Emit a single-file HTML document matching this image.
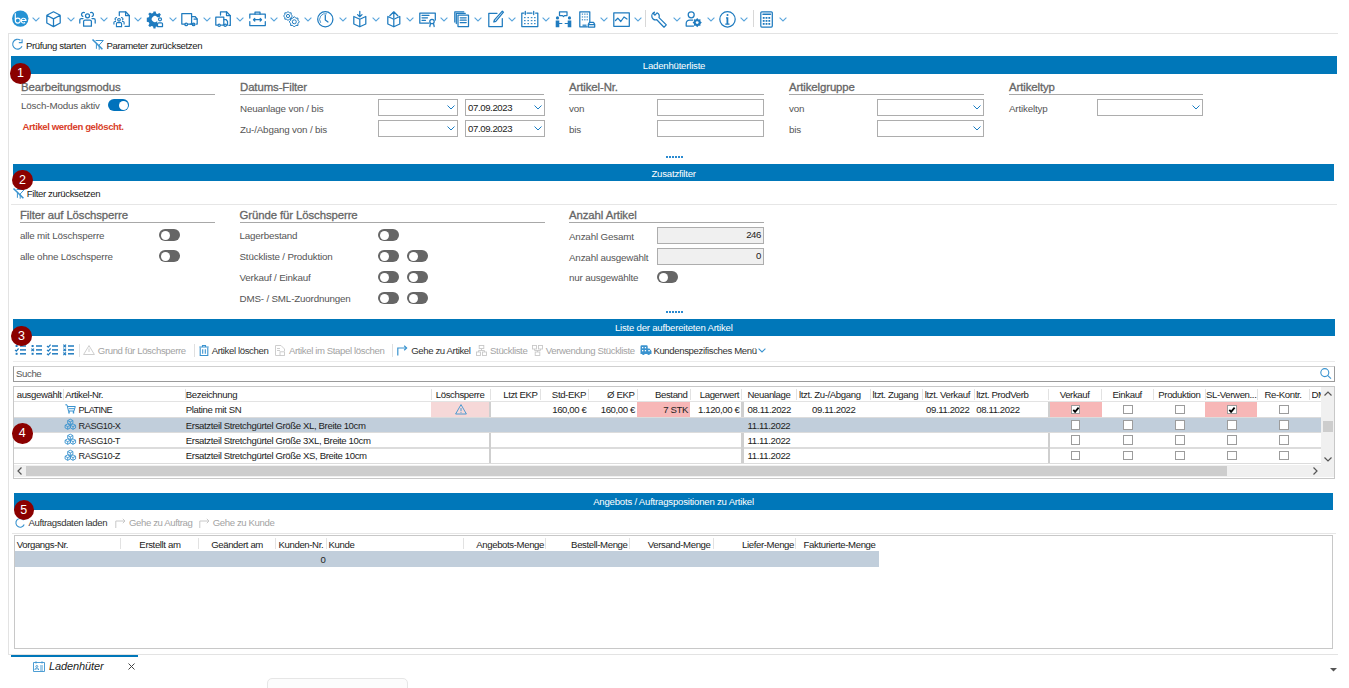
<!DOCTYPE html><html><head><meta charset="utf-8"><style>
*{box-sizing:border-box}
html,body{margin:0;padding:0}
body{width:1349px;height:688px;overflow:hidden;background:#fff;position:relative;font-family:"Liberation Sans",sans-serif;font-size:9.6px;letter-spacing:-0.38px;color:#222}
.t{position:absolute;white-space:nowrap;}
.b{position:absolute}
.lbl{color:#555;font-size:9.8px;letter-spacing:-0.17px}
.hd{font-size:11.4px;letter-spacing:-0.1px;color:#666;-webkit-text-stroke:0.3px #666}
.dis{color:#a3a3a3}
.wt{color:#fff}
svg{position:absolute;overflow:visible}
</style></head><body>
<div class="b" style="left:8px;top:33px;width:1330px;height:1px;background:#e3e3e3"></div>
<div class="b" style="left:8px;top:33px;width:1px;height:622px;background:#e3e3e3"></div>
<div class="b" style="left:8px;top:654px;width:1330px;height:1px;background:#e3e3e3"></div>
<div class="t " style="left:26px;top:37.5px;height:16px;line-height:16px;">Prüfung starten</div>
<div class="t " style="left:106.5px;top:37.5px;height:16px;line-height:16px;">Parameter zurücksetzen</div>
<div class="b" style="left:11px;top:56.2px;width:1326px;height:17.5px;background:#0077b9"></div>
<div class="t wt" style="left:11px;width:1326px;text-align:center;top:57.75px;height:16px;line-height:16px;letter-spacing:-0.21px">Ladenhüterliste</div>
<div class="b" style="left:13px;top:164.1px;width:1321.3px;height:17.400000000000006px;background:#0077b9"></div>
<div class="t wt" style="left:13px;width:1321.3px;text-align:center;top:165.60000000000002px;height:16px;line-height:16px;letter-spacing:-0.21px">Zusatzfilter</div>
<div class="b" style="left:13px;top:319px;width:1321.5px;height:17.30000000000001px;background:#0077b9"></div>
<div class="t wt" style="left:13px;width:1321.5px;text-align:center;top:320.45px;height:16px;line-height:16px;letter-spacing:-0.21px">Liste der aufbereiteten Artikel</div>
<div class="b" style="left:14px;top:493px;width:1319px;height:16.80000000000001px;background:#0077b9"></div>
<div class="t wt" style="left:14px;width:1319px;text-align:center;top:494.2px;height:16px;line-height:16px;letter-spacing:-0.21px">Angebots / Auftragspositionen zu Artikel</div>
<div class="t hd" style="left:21px;top:77.7px;height:18px;line-height:18px;">Bearbeitungsmodus</div>
<div class="b" style="left:21px;top:94px;width:194px;height:1px;background:#a8a8a8"></div>
<div class="t hd" style="left:240px;top:77.7px;height:18px;line-height:18px;">Datums-Filter</div>
<div class="b" style="left:240px;top:94px;width:304px;height:1px;background:#a8a8a8"></div>
<div class="t hd" style="left:569px;top:77.7px;height:18px;line-height:18px;">Artikel-Nr.</div>
<div class="b" style="left:569px;top:94px;width:195px;height:1px;background:#a8a8a8"></div>
<div class="t hd" style="left:789px;top:77.7px;height:18px;line-height:18px;">Artikelgruppe</div>
<div class="b" style="left:789px;top:94px;width:195px;height:1px;background:#a8a8a8"></div>
<div class="t hd" style="left:1009px;top:77.7px;height:18px;line-height:18px;">Artikeltyp</div>
<div class="b" style="left:1009px;top:94px;width:194px;height:1px;background:#a8a8a8"></div>
<div class="t lbl" style="left:21px;top:98.0px;height:16px;line-height:16px;">Lösch-Modus aktiv</div>
<div class="b" style="left:108px;top:99px;width:21px;height:12px;border-radius:6px;background:#0072bc"></div>
<div class="b" style="left:119px;top:100.5px;width:9px;height:9px;border-radius:50%;background:#fff"></div>
<div class="t " style="left:22.5px;top:119.0px;height:16px;line-height:16px;color:#d9412a;font-weight:bold;letter-spacing:-0.41px">Artikel werden gelöscht.</div>
<div class="t lbl" style="left:240px;top:100.8px;height:16px;line-height:16px;">Neuanlage von / bis</div>
<div class="t lbl" style="left:240px;top:122.10000000000002px;height:16px;line-height:16px;">Zu-/Abgang von / bis</div>
<div class="b" style="left:378px;top:99px;width:80px;height:17px;border:1px solid #adadad;background:#fff"></div>
<svg style="left:446.5px;top:105.3px" width="8" height="5"><path d="M0.5 0.5 L4 4 L7.5 0.5" fill="none" stroke="#1a7dc4" stroke-width="1"/></svg>
<div class="b" style="left:465px;top:99px;width:80px;height:17px;border:1px solid #adadad;background:#fff"></div>
<div class="t " style="left:468px;top:99.5px;height:16px;line-height:16px;">07.09.2023</div>
<svg style="left:533.5px;top:105.3px" width="8" height="5"><path d="M0.5 0.5 L4 4 L7.5 0.5" fill="none" stroke="#1a7dc4" stroke-width="1"/></svg>
<div class="b" style="left:378px;top:120px;width:80px;height:17px;border:1px solid #adadad;background:#fff"></div>
<svg style="left:446.5px;top:126.30000000000001px" width="8" height="5"><path d="M0.5 0.5 L4 4 L7.5 0.5" fill="none" stroke="#1a7dc4" stroke-width="1"/></svg>
<div class="b" style="left:465px;top:120px;width:80px;height:17px;border:1px solid #adadad;background:#fff"></div>
<div class="t " style="left:468px;top:120.5px;height:16px;line-height:16px;">07.09.2023</div>
<svg style="left:533.5px;top:126.30000000000001px" width="8" height="5"><path d="M0.5 0.5 L4 4 L7.5 0.5" fill="none" stroke="#1a7dc4" stroke-width="1"/></svg>
<div class="t lbl" style="left:569px;top:100.8px;height:16px;line-height:16px;">von</div>
<div class="t lbl" style="left:569px;top:122.10000000000002px;height:16px;line-height:16px;">bis</div>
<div class="b" style="left:657px;top:99px;width:107px;height:17px;border:1px solid #adadad;background:#fff"></div>
<div class="b" style="left:657px;top:120px;width:107px;height:17px;border:1px solid #adadad;background:#fff"></div>
<div class="t lbl" style="left:789px;top:100.8px;height:16px;line-height:16px;">von</div>
<div class="t lbl" style="left:789px;top:122.10000000000002px;height:16px;line-height:16px;">bis</div>
<div class="b" style="left:877px;top:99px;width:107px;height:17px;border:1px solid #adadad;background:#fff"></div>
<svg style="left:972.5px;top:105.3px" width="8" height="5"><path d="M0.5 0.5 L4 4 L7.5 0.5" fill="none" stroke="#1a7dc4" stroke-width="1"/></svg>
<div class="b" style="left:877px;top:120px;width:107px;height:17px;border:1px solid #adadad;background:#fff"></div>
<svg style="left:972.5px;top:126.30000000000001px" width="8" height="5"><path d="M0.5 0.5 L4 4 L7.5 0.5" fill="none" stroke="#1a7dc4" stroke-width="1"/></svg>
<div class="t lbl" style="left:1009px;top:100.8px;height:16px;line-height:16px;">Artikeltyp</div>
<div class="b" style="left:1097px;top:99px;width:106px;height:17px;border:1px solid #adadad;background:#fff"></div>
<svg style="left:1191.5px;top:105.3px" width="8" height="5"><path d="M0.5 0.5 L4 4 L7.5 0.5" fill="none" stroke="#1a7dc4" stroke-width="1"/></svg>
<div class="b" style="left:666px;top:156px;width:1.5px;height:1.5px;background:#2a8ad0"></div>
<div class="b" style="left:669px;top:156px;width:1.5px;height:1.5px;background:#2a8ad0"></div>
<div class="b" style="left:672px;top:156px;width:1.5px;height:1.5px;background:#2a8ad0"></div>
<div class="b" style="left:675px;top:156px;width:1.5px;height:1.5px;background:#2a8ad0"></div>
<div class="b" style="left:678px;top:156px;width:1.5px;height:1.5px;background:#2a8ad0"></div>
<div class="b" style="left:681px;top:156px;width:1.5px;height:1.5px;background:#2a8ad0"></div>
<div class="t " style="left:26.8px;top:186.2px;height:16px;line-height:16px;">Filter zurücksetzen</div>
<div class="b" style="left:11px;top:204px;width:1326px;height:1px;background:#e6e6e6"></div>
<div class="t hd" style="left:20px;top:205.7px;height:18px;line-height:18px;">Filter auf Löschsperre</div>
<div class="b" style="left:20px;top:222px;width:195px;height:1px;background:#a8a8a8"></div>
<div class="t hd" style="left:239.5px;top:205.7px;height:18px;line-height:18px;">Gründe für Löschsperre</div>
<div class="b" style="left:239.5px;top:222px;width:305.5px;height:1px;background:#a8a8a8"></div>
<div class="t hd" style="left:569px;top:205.7px;height:18px;line-height:18px;">Anzahl Artikel</div>
<div class="b" style="left:569px;top:222px;width:195px;height:1px;background:#a8a8a8"></div>
<div class="t lbl" style="left:20px;top:228.3px;height:16px;line-height:16px;">alle mit Löschsperre</div>
<div class="t lbl" style="left:20px;top:248.8px;height:16px;line-height:16px;">alle ohne Löschsperre</div>
<div class="b" style="left:159px;top:229px;width:21px;height:12px;border-radius:6px;background:#666"></div>
<div class="b" style="left:160.5px;top:230.5px;width:9px;height:9px;border-radius:50%;background:#fff"></div>
<div class="b" style="left:159px;top:250px;width:21px;height:12px;border-radius:6px;background:#666"></div>
<div class="b" style="left:160.5px;top:251.5px;width:9px;height:9px;border-radius:50%;background:#fff"></div>
<div class="t lbl" style="left:239.5px;top:228.3px;height:16px;line-height:16px;">Lagerbestand</div>
<div class="t lbl" style="left:239.5px;top:248.8px;height:16px;line-height:16px;">Stückliste / Produktion</div>
<div class="t lbl" style="left:239.5px;top:270.0px;height:16px;line-height:16px;">Verkauf / Einkauf</div>
<div class="t lbl" style="left:239.5px;top:290.6px;height:16px;line-height:16px;">DMS- / SML-Zuordnungen</div>
<div class="b" style="left:378px;top:229px;width:21px;height:12px;border-radius:6px;background:#666"></div>
<div class="b" style="left:379.5px;top:230.5px;width:9px;height:9px;border-radius:50%;background:#fff"></div>
<div class="b" style="left:378px;top:250px;width:21px;height:12px;border-radius:6px;background:#666"></div>
<div class="b" style="left:379.5px;top:251.5px;width:9px;height:9px;border-radius:50%;background:#fff"></div>
<div class="b" style="left:407px;top:250px;width:21px;height:12px;border-radius:6px;background:#666"></div>
<div class="b" style="left:408.5px;top:251.5px;width:9px;height:9px;border-radius:50%;background:#fff"></div>
<div class="b" style="left:378px;top:271px;width:21px;height:12px;border-radius:6px;background:#666"></div>
<div class="b" style="left:379.5px;top:272.5px;width:9px;height:9px;border-radius:50%;background:#fff"></div>
<div class="b" style="left:407px;top:271px;width:21px;height:12px;border-radius:6px;background:#666"></div>
<div class="b" style="left:408.5px;top:272.5px;width:9px;height:9px;border-radius:50%;background:#fff"></div>
<div class="b" style="left:378px;top:292px;width:21px;height:12px;border-radius:6px;background:#666"></div>
<div class="b" style="left:379.5px;top:293.5px;width:9px;height:9px;border-radius:50%;background:#fff"></div>
<div class="b" style="left:407px;top:292px;width:21px;height:12px;border-radius:6px;background:#666"></div>
<div class="b" style="left:408.5px;top:293.5px;width:9px;height:9px;border-radius:50%;background:#fff"></div>
<div class="t lbl" style="left:569px;top:228.9px;height:16px;line-height:16px;">Anzahl Gesamt</div>
<div class="t lbl" style="left:569px;top:249.5px;height:16px;line-height:16px;">Anzahl ausgewählt</div>
<div class="t lbl" style="left:569px;top:269.5px;height:16px;line-height:16px;">nur ausgewählte</div>
<div class="b" style="left:657px;top:227px;width:107px;height:17px;border:1px solid #adadad;background:#f0f0f0"></div>
<div class="b" style="left:657px;top:247.5px;width:107px;height:17.0px;border:1px solid #adadad;background:#f0f0f0"></div>
<div class="t " style="right:588px;top:227.0px;height:16px;line-height:16px;">246</div>
<div class="t " style="right:588px;top:248.0px;height:16px;line-height:16px;">0</div>
<div class="b" style="left:657px;top:271px;width:21px;height:12px;border-radius:6px;background:#666"></div>
<div class="b" style="left:658.5px;top:272.5px;width:9px;height:9px;border-radius:50%;background:#fff"></div>
<div class="b" style="left:666px;top:311px;width:1.5px;height:1.5px;background:#2a8ad0"></div>
<div class="b" style="left:669px;top:311px;width:1.5px;height:1.5px;background:#2a8ad0"></div>
<div class="b" style="left:672px;top:311px;width:1.5px;height:1.5px;background:#2a8ad0"></div>
<div class="b" style="left:675px;top:311px;width:1.5px;height:1.5px;background:#2a8ad0"></div>
<div class="b" style="left:678px;top:311px;width:1.5px;height:1.5px;background:#2a8ad0"></div>
<div class="b" style="left:681px;top:311px;width:1.5px;height:1.5px;background:#2a8ad0"></div>
<div class="b" style="left:13px;top:360.8px;width:1322px;height:1.1999999999999886px;background:#ebebeb"></div>
<div class="b" style="left:13px;top:365.7px;width:1322px;height:15.900000000000034px;border:1px solid #9a9a9a;border-top:1.5px solid #cfcfcf;background:#fff"></div>
<div class="t " style="left:16px;top:365.8px;height:16px;line-height:16px;color:#555">Suche</div>
<div class="b" style="left:13px;top:386px;width:1322px;height:93px;border:1px solid #c8c8c8;background:#fff"></div>
<div class="b" style="left:12px;top:532.5px;width:1324px;height:1.0px;background:#e6e6e6"></div>
<div class="b" style="left:14px;top:535px;width:1319px;height:114px;border:1px solid #c8c8c8;background:#fff"></div>
<div class="b" style="left:11px;top:654.5px;width:127px;height:2.0px;background:#0077b9"></div>
<div class="t " style="left:49px;top:658.0px;height:16px;line-height:16px;font-style:italic;font-size:11px;letter-spacing:-0.1px">Ladenhüter</div>
<div class="b" style="left:63.3px;top:389px;width:1.0px;height:11px;background:#e2e2e2"></div>
<div class="b" style="left:184.6px;top:389px;width:1.0px;height:11px;background:#e2e2e2"></div>
<div class="b" style="left:430.6px;top:389px;width:1.0px;height:11px;background:#e2e2e2"></div>
<div class="b" style="left:489.5px;top:389px;width:1.0px;height:11px;background:#e2e2e2"></div>
<div class="b" style="left:540px;top:389px;width:1px;height:11px;background:#e2e2e2"></div>
<div class="b" style="left:588px;top:389px;width:1px;height:11px;background:#e2e2e2"></div>
<div class="b" style="left:636.7px;top:389px;width:1.0px;height:11px;background:#e2e2e2"></div>
<div class="b" style="left:689.5px;top:389px;width:1.0px;height:11px;background:#e2e2e2"></div>
<div class="b" style="left:741px;top:389px;width:1px;height:11px;background:#e2e2e2"></div>
<div class="b" style="left:795.6px;top:389px;width:1.0px;height:11px;background:#e2e2e2"></div>
<div class="b" style="left:870.2px;top:389px;width:1.0px;height:11px;background:#e2e2e2"></div>
<div class="b" style="left:922.4px;top:389px;width:1.0px;height:11px;background:#e2e2e2"></div>
<div class="b" style="left:974px;top:389px;width:1px;height:11px;background:#e2e2e2"></div>
<div class="b" style="left:1048px;top:389px;width:1px;height:11px;background:#e2e2e2"></div>
<div class="b" style="left:1101.2px;top:389px;width:1.0px;height:11px;background:#e2e2e2"></div>
<div class="b" style="left:1153.3px;top:389px;width:1.0px;height:11px;background:#e2e2e2"></div>
<div class="b" style="left:1205.4px;top:389px;width:1.0px;height:11px;background:#e2e2e2"></div>
<div class="b" style="left:1257.1px;top:389px;width:1.0px;height:11px;background:#e2e2e2"></div>
<div class="b" style="left:1309.1px;top:389px;width:1.0px;height:11px;background:#e2e2e2"></div>
<div class="b" style="left:14px;top:401px;width:1307px;height:1px;background:#e3e3e3"></div>
<div class="t " style="left:16.7px;top:387.0px;height:16px;line-height:16px;">ausgewählt</div>
<div class="t " style="left:65.2px;top:387.0px;height:16px;line-height:16px;">Artikel-Nr.</div>
<div class="t " style="left:185.8px;top:387.0px;height:16px;line-height:16px;">Bezeichnung</div>
<div class="t " style="left:430.6px;width:58.89999999999998px;text-align:center;top:387.0px;height:16px;line-height:16px;">Löschsperre</div>
<div class="t " style="right:811.5px;top:387.0px;height:16px;line-height:16px;">Ltzt EKP</div>
<div class="t " style="right:763px;top:387.0px;height:16px;line-height:16px;">Std-EKP</div>
<div class="t " style="right:714.5px;top:387.0px;height:16px;line-height:16px;">Ø EKP</div>
<div class="t " style="right:661.5px;top:387.0px;height:16px;line-height:16px;">Bestand</div>
<div class="t " style="right:610px;top:387.0px;height:16px;line-height:16px;">Lagerwert</div>
<div class="t " style="left:747.5px;top:387.0px;height:16px;line-height:16px;">Neuanlage</div>
<div class="t " style="left:799px;top:387.0px;height:16px;line-height:16px;">ltzt. Zu-/Abgang</div>
<div class="t " style="left:872.6px;top:387.0px;height:16px;line-height:16px;">ltzt. Zugang</div>
<div class="t " style="left:924.8px;top:387.0px;height:16px;line-height:16px;">ltzt. Verkauf</div>
<div class="t " style="left:976.2px;top:387.0px;height:16px;line-height:16px;">ltzt. ProdVerb</div>
<div class="t " style="left:1048px;width:53.200000000000045px;text-align:center;top:387.0px;height:16px;line-height:16px;">Verkauf</div>
<div class="t " style="left:1101.2px;width:52.09999999999991px;text-align:center;top:387.0px;height:16px;line-height:16px;">Einkauf</div>
<div class="t " style="left:1153.3px;width:52.100000000000136px;text-align:center;top:387.0px;height:16px;line-height:16px;">Produktion</div>
<div class="t " style="left:1205.4px;width:51.69999999999982px;text-align:center;top:387.0px;height:16px;line-height:16px;">SL-Verwen...</div>
<div class="t " style="left:1257.1px;width:52.0px;text-align:center;top:387.0px;height:16px;line-height:16px;">Re-Kontr.</div>
<div class="t" style="left:1311.5px;top:387px;height:16px;line-height:16px;width:10px;overflow:hidden">DM</div>
<div class="b" style="left:14px;top:417.3px;width:1307px;height:15.300000000000011px;background:#c1cedb"></div>
<div class="b" style="left:14px;top:416.6px;width:1307px;height:1.3999999999999773px;background:#dcdcdc"></div>
<div class="b" style="left:14px;top:431.90000000000003px;width:1307px;height:1.3999999999999773px;background:#dcdcdc"></div>
<div class="b" style="left:14px;top:447.2px;width:1307px;height:1.3999999999999773px;background:#dcdcdc"></div>
<div class="b" style="left:14px;top:462.5px;width:1307px;height:1.3999999999999773px;background:#dcdcdc"></div>
<div class="b" style="left:431px;top:402px;width:58.5px;height:14.800000000000011px;background:#f6d8d8"></div>
<div class="b" style="left:637px;top:402px;width:52.5px;height:14.800000000000011px;background:#f7b7b7"></div>
<div class="b" style="left:1049.5px;top:402px;width:52.0px;height:14.800000000000011px;background:#f7b7b7"></div>
<div class="b" style="left:1205.4px;top:402px;width:51.69999999999982px;height:14.800000000000011px;background:#f7b7b7"></div>
<div class="b" style="left:488.8px;top:402px;width:2.3999999999999773px;height:14.800000000000011px;background:#cfcfcf"></div>
<div class="b" style="left:488.8px;top:432.6px;width:2.3999999999999773px;height:30.599999999999966px;background:#cfcfcf"></div>
<div class="b" style="left:741.2px;top:402px;width:2.3999999999999773px;height:14.800000000000011px;background:#cfcfcf"></div>
<div class="b" style="left:741.2px;top:432.6px;width:2.3999999999999773px;height:30.599999999999966px;background:#cfcfcf"></div>
<div class="b" style="left:1047.5px;top:402px;width:2.400000000000091px;height:14.800000000000011px;background:#cfcfcf"></div>
<div class="b" style="left:1047.5px;top:432.6px;width:2.400000000000091px;height:30.599999999999966px;background:#cfcfcf"></div>
<div class="t " style="left:78.6px;top:402.45px;height:16px;line-height:16px;font-size:9.2px;letter-spacing:-0.6px">PLATINE</div>
<div class="t " style="left:185.8px;top:402.45px;height:16px;line-height:16px;">Platine mit SN</div>
<div class="t " style="right:762.5px;top:402.45px;height:16px;line-height:16px;">160,00 €</div>
<div class="t " style="right:714px;top:402.45px;height:16px;line-height:16px;">160,00 €</div>
<div class="t " style="right:661px;top:402.45px;height:16px;line-height:16px;">7 STK</div>
<div class="t " style="right:609.5px;top:402.45px;height:16px;line-height:16px;">1.120,00 €</div>
<div class="t " style="left:747.5px;top:402.45px;height:16px;line-height:16px;">08.11.2022</div>
<div class="t " style="left:812px;top:402.45px;height:16px;line-height:16px;">09.11.2022</div>
<div class="t " style="right:379.5px;top:402.45px;height:16px;line-height:16px;">09.11.2022</div>
<div class="t " style="left:976.2px;top:402.45px;height:16px;line-height:16px;">08.11.2022</div>
<div class="t " style="left:78.6px;top:417.75000000000006px;height:16px;line-height:16px;font-size:9.2px;letter-spacing:-0.45px">RASG10-X</div>
<div class="t " style="left:185.8px;top:417.75000000000006px;height:16px;line-height:16px;">Ersatzteil Stretchgürtel Größe XL, Breite 10cm</div>
<div class="t " style="left:747.5px;top:417.75000000000006px;height:16px;line-height:16px;">11.11.2022</div>
<div class="t " style="left:78.6px;top:433.05px;height:16px;line-height:16px;font-size:9.2px;letter-spacing:-0.45px">RASG10-T</div>
<div class="t " style="left:185.8px;top:433.05px;height:16px;line-height:16px;">Ersatzteil Stretchgürtel Größe 3XL, Breite 10cm</div>
<div class="t " style="left:747.5px;top:433.05px;height:16px;line-height:16px;">11.11.2022</div>
<div class="t " style="left:78.6px;top:448.34999999999997px;height:16px;line-height:16px;font-size:9.2px;letter-spacing:-0.45px">RASG10-Z</div>
<div class="t " style="left:185.8px;top:448.34999999999997px;height:16px;line-height:16px;">Ersatzteil Stretchgürtel Größe XS, Breite 10cm</div>
<div class="t " style="left:747.5px;top:448.34999999999997px;height:16px;line-height:16px;">11.11.2022</div>
<div class="b" style="left:1070.6px;top:404.84999999999997px;width:9.6px;height:9.6px;border:1px solid #9c9c9c;background:#fff"></div>
<svg style="left:1070.6px;top:404.84999999999997px" width="10" height="10"><path d="M2.3 4.8 L4.1 6.8 L7.6 2.6" fill="none" stroke="#000" stroke-width="1.8"/></svg>
<div class="b" style="left:1123.25px;top:404.84999999999997px;width:9.6px;height:9.6px;border:1px solid #9c9c9c;background:#fff"></div>
<div class="b" style="left:1175.35px;top:404.84999999999997px;width:9.6px;height:9.6px;border:1px solid #9c9c9c;background:#fff"></div>
<div class="b" style="left:1227.25px;top:404.84999999999997px;width:9.6px;height:9.6px;border:1px solid #9c9c9c;background:#fff"></div>
<svg style="left:1227.25px;top:404.84999999999997px" width="10" height="10"><path d="M2.3 4.8 L4.1 6.8 L7.6 2.6" fill="none" stroke="#000" stroke-width="1.8"/></svg>
<div class="b" style="left:1279.1px;top:404.84999999999997px;width:9.6px;height:9.6px;border:1px solid #9c9c9c;background:#fff"></div>
<div class="b" style="left:1070.6px;top:420.15000000000003px;width:9.6px;height:9.6px;border:1px solid #9c9c9c;background:#fff"></div>
<div class="b" style="left:1123.25px;top:420.15000000000003px;width:9.6px;height:9.6px;border:1px solid #9c9c9c;background:#fff"></div>
<div class="b" style="left:1175.35px;top:420.15000000000003px;width:9.6px;height:9.6px;border:1px solid #9c9c9c;background:#fff"></div>
<div class="b" style="left:1227.25px;top:420.15000000000003px;width:9.6px;height:9.6px;border:1px solid #9c9c9c;background:#fff"></div>
<div class="b" style="left:1279.1px;top:420.15000000000003px;width:9.6px;height:9.6px;border:1px solid #9c9c9c;background:#fff"></div>
<div class="b" style="left:1070.6px;top:435.45px;width:9.6px;height:9.6px;border:1px solid #9c9c9c;background:#fff"></div>
<div class="b" style="left:1123.25px;top:435.45px;width:9.6px;height:9.6px;border:1px solid #9c9c9c;background:#fff"></div>
<div class="b" style="left:1175.35px;top:435.45px;width:9.6px;height:9.6px;border:1px solid #9c9c9c;background:#fff"></div>
<div class="b" style="left:1227.25px;top:435.45px;width:9.6px;height:9.6px;border:1px solid #9c9c9c;background:#fff"></div>
<div class="b" style="left:1279.1px;top:435.45px;width:9.6px;height:9.6px;border:1px solid #9c9c9c;background:#fff"></div>
<div class="b" style="left:1070.6px;top:450.74999999999994px;width:9.6px;height:9.6px;border:1px solid #9c9c9c;background:#fff"></div>
<div class="b" style="left:1123.25px;top:450.74999999999994px;width:9.6px;height:9.6px;border:1px solid #9c9c9c;background:#fff"></div>
<div class="b" style="left:1175.35px;top:450.74999999999994px;width:9.6px;height:9.6px;border:1px solid #9c9c9c;background:#fff"></div>
<div class="b" style="left:1227.25px;top:450.74999999999994px;width:9.6px;height:9.6px;border:1px solid #9c9c9c;background:#fff"></div>
<div class="b" style="left:1279.1px;top:450.74999999999994px;width:9.6px;height:9.6px;border:1px solid #9c9c9c;background:#fff"></div>
<div class="b" style="left:1321.3px;top:387px;width:13.0px;height:90px;background:#f0f0f0"></div>
<div class="b" style="left:1322.5px;top:420.5px;width:10.5px;height:11.5px;background:#cdcdcd"></div>
<svg style="left:1324px;top:391px" width="8" height="5"><path d="M0.5 4.5 L4 1 L7.5 4.5" fill="none" stroke="#555" stroke-width="1.2"/></svg>
<svg style="left:1324px;top:457px" width="8" height="5"><path d="M0.5 0.5 L4 4 L7.5 0.5" fill="none" stroke="#555" stroke-width="1.2"/></svg>
<div class="b" style="left:14px;top:465px;width:1307.3px;height:12px;background:#f0f0f0"></div>
<div class="b" style="left:26px;top:466px;width:1200.7px;height:10px;background:#cdcdcd"></div>
<svg style="left:17px;top:467px" width="5" height="8"><path d="M4.5 0.5 L1 4 L4.5 7.5" fill="none" stroke="#555" stroke-width="1.2"/></svg>
<svg style="left:1313px;top:467px" width="5" height="8"><path d="M0.5 0.5 L4 4 L0.5 7.5" fill="none" stroke="#555" stroke-width="1.2"/></svg>
<div class="b" style="left:120px;top:538px;width:1px;height:11px;background:#e2e2e2"></div>
<div class="b" style="left:197.5px;top:538px;width:1.0px;height:11px;background:#e2e2e2"></div>
<div class="b" style="left:275.2px;top:538px;width:1.0px;height:11px;background:#e2e2e2"></div>
<div class="b" style="left:326.2px;top:538px;width:1.0px;height:11px;background:#e2e2e2"></div>
<div class="b" style="left:462.7px;top:538px;width:1.0px;height:11px;background:#e2e2e2"></div>
<div class="b" style="left:545.3px;top:538px;width:1.0px;height:11px;background:#e2e2e2"></div>
<div class="b" style="left:629.2px;top:538px;width:1.0px;height:11px;background:#e2e2e2"></div>
<div class="b" style="left:712.5px;top:538px;width:1.0px;height:11px;background:#e2e2e2"></div>
<div class="b" style="left:795.4px;top:538px;width:1.0px;height:11px;background:#e2e2e2"></div>
<div class="t " style="left:16.7px;top:536.7px;height:16px;line-height:16px;">Vorgangs-Nr.</div>
<div class="t " style="right:1168.5px;top:536.7px;height:16px;line-height:16px;">Erstellt am</div>
<div class="t " style="right:1086px;top:536.7px;height:16px;line-height:16px;">Geändert am</div>
<div class="t " style="left:278.5px;top:536.7px;height:16px;line-height:16px;">Kunden-Nr.</div>
<div class="t " style="left:328.5px;top:536.7px;height:16px;line-height:16px;">Kunde</div>
<div class="t " style="right:805px;top:536.7px;height:16px;line-height:16px;">Angebots-Menge</div>
<div class="t " style="right:721.5px;top:536.7px;height:16px;line-height:16px;">Bestell-Menge</div>
<div class="t " style="right:638.5px;top:536.7px;height:16px;line-height:16px;">Versand-Menge</div>
<div class="t " style="right:555px;top:536.7px;height:16px;line-height:16px;">Liefer-Menge</div>
<div class="t " style="left:803.6px;top:536.7px;height:16px;line-height:16px;">Fakturierte-Menge</div>
<div class="b" style="left:15px;top:550.9px;width:864px;height:15.800000000000068px;background:#c1cedb"></div>
<div class="t " style="right:1023.5px;top:551.5px;height:16px;line-height:16px;">0</div>
<svg style="left:11.7px;top:10.4px" width="17" height="17" viewBox="0 0 17 17"><circle cx="8.3" cy="8.6" r="8.2" fill="#2592d4"/><path d="M3.3 3.2V10.6a2.5 2.5 0 1 0 2.5-2.5a2.5 2.5 0 0 0-2.5 2.5" fill="none" stroke="#fff" stroke-width="1.15"/><path d="M9.2 10.5H14a2.4 2.4 0 1 0-0.9 2" fill="none" stroke="#fff" stroke-width="1.15"/></svg>
<svg style="left:32.4px;top:16.5px" width="8" height="5" viewBox="0 0 8 5"><path d="M0.6 0.6L4 4L7.4 0.6" fill="none" stroke="#5aa5dc" stroke-width="1.1"/></svg>
<svg style="left:46.2px;top:10.8px" width="17" height="17" viewBox="0 0 17 17"><path fill="none" stroke="#1f7bbf" stroke-width="1.25" stroke-linejoin="round" stroke-linecap="round" d="M7.5 0.8L14.2 4.3V12L7.5 15.6L0.8 12V4.3Z M0.8 4.3L7.5 7.9L14.2 4.3 M7.5 7.9V15.6"/></svg>
<svg style="left:66.5px;top:16.5px" width="8" height="5" viewBox="0 0 8 5"><path d="M0.6 0.6L4 4L7.4 0.6" fill="none" stroke="#5aa5dc" stroke-width="1.1"/></svg>
<svg style="left:79.2px;top:10.8px" width="17" height="17" viewBox="0 0 17 17"><g fill="none" stroke="#1f7bbf" stroke-width="1.25" stroke-linejoin="round" stroke-linecap="round"><circle cx="8.5" cy="4.8" r="2"/><path d="M4.6 15.2V10.6a1.5 1.5 0 0 1 1.5-1.5h4.8a1.5 1.5 0 0 1 1.5 1.5v4.6z"/><path d="M5.4 1.6A2 2 0 1 0 3.8 5.4"/><path d="M11.6 1.6A2 2 0 1 1 13.2 5.4"/><path d="M0.8 12V9a1.5 1.5 0 0 1 1.5-1.5H4"/><path d="M16.2 12V9a1.5 1.5 0 0 0-1.5-1.5H13"/></g></svg>
<svg style="left:100.3px;top:16.5px" width="8" height="5" viewBox="0 0 8 5"><path d="M0.6 0.6L4 4L7.4 0.6" fill="none" stroke="#5aa5dc" stroke-width="1.1"/></svg>
<svg style="left:112.8px;top:10.6px" width="17" height="17" viewBox="0 0 17 17"><g fill="none" stroke="#1f7bbf" stroke-width="1.25" stroke-linejoin="round" stroke-linecap="round"><path d="M6.3 4.5V0.8h6.3l3.7 3.7v10.8H12"/><path d="M12.6 0.8v3.7h3.7"/></g><g transform="translate(0.4,5.6) scale(0.66)" fill="none" stroke="#1f7bbf" stroke-width="1.7"><circle cx="8.5" cy="4.8" r="2"/><path d="M4.6 15.2V10.6a1.5 1.5 0 0 1 1.5-1.5h4.8a1.5 1.5 0 0 1 1.5 1.5v4.6z"/><path d="M5.4 1.6A2 2 0 1 0 3.8 5.4"/><path d="M11.6 1.6A2 2 0 1 1 13.2 5.4"/><path d="M0.8 12V9a1.5 1.5 0 0 1 1.5-1.5H4"/><path d="M16.2 12V9a1.5 1.5 0 0 0-1.5-1.5H13"/></g></svg>
<svg style="left:134.4px;top:16.5px" width="8" height="5" viewBox="0 0 8 5"><path d="M0.6 0.6L4 4L7.4 0.6" fill="none" stroke="#5aa5dc" stroke-width="1.1"/></svg>
<svg style="left:147.3px;top:10.6px" width="17" height="17" viewBox="0 0 17 17"><path fill="#1f7bbf" d="M6.5 0.5h2.2l0.4 2 1.5 0.6 1.7-1.1 1.6 1.6-1.1 1.7 0.4 1H10.2a3 3 0 1 0 0 3.6v5.5l-1.5 0.3-0.2 1.8H6.5l-0.4-2-1.5-0.6-1.7 1.1-1.6-1.6 1.1-1.7-0.6-1.5-2-0.4V6.7l2-0.4 0.6-1.5-1.1-1.7 1.6-1.6 1.7 1.1 1.5-0.6z"/><g fill="none" stroke="#1f7bbf" stroke-width="1.25" stroke-linejoin="round" stroke-linecap="round"><circle cx="13" cy="8.3" r="1.5"/><path d="M10.5 15.5v-2.5a1.2 1.2 0 0 1 1.2-1.2h2.6a1.2 1.2 0 0 1 1.2 1.2v2.5z"/></g></svg>
<svg style="left:168.5px;top:16.5px" width="8" height="5" viewBox="0 0 8 5"><path d="M0.6 0.6L4 4L7.4 0.6" fill="none" stroke="#5aa5dc" stroke-width="1.1"/></svg>
<svg style="left:181px;top:12px" width="17" height="17" viewBox="0 0 17 17"><g fill="none" stroke="#1f7bbf" stroke-width="1.25" stroke-linejoin="round" stroke-linecap="round"><path d="M4 12H0.8V1.5h9.8V12H6.5"/><path d="M10.6 4.5h3.4l2.2 2.5V12h-0.8 M13.8 12h-4.5"/><circle cx="5.2" cy="12.4" r="1.3"/><circle cx="12.6" cy="12.4" r="1.3"/><path d="M13 7h3"/></g></svg>
<svg style="left:202.5px;top:16.5px" width="8" height="5" viewBox="0 0 8 5"><path d="M0.6 0.6L4 4L7.4 0.6" fill="none" stroke="#5aa5dc" stroke-width="1.1"/></svg>
<svg style="left:215px;top:10.8px" width="17" height="17" viewBox="0 0 17 17"><g fill="none" stroke="#1f7bbf" stroke-width="1.25" stroke-linejoin="round" stroke-linecap="round"><path d="M5.5 4V0.8h6l3.8 3.8v9.8H14"/><path d="M11.5 0.8V4.6h3.8"/><path d="M2.5 14H0.8V6.2h8V14H6.5"/><path d="M8.8 8.5h2.2l1.5 1.8V14h-1"/><circle cx="4.2" cy="14.2" r="1.2"/><circle cx="10.2" cy="14.2" r="1.2"/></g></svg>
<svg style="left:236.2px;top:16.5px" width="8" height="5" viewBox="0 0 8 5"><path d="M0.6 0.6L4 4L7.4 0.6" fill="none" stroke="#5aa5dc" stroke-width="1.1"/></svg>
<svg style="left:249.1px;top:11px" width="17" height="17" viewBox="0 0 17 17"><g fill="none" stroke="#1f7bbf" stroke-width="1.25" stroke-linejoin="round" stroke-linecap="round"><path d="M0.8 7V3.2h15.5V7 M0.8 10.5v4h15.5v-4"/><path d="M6 3.2V1.2h5v2"/><path d="M4.5 8.7h8 M5.8 7.4L4.5 8.7L5.8 10 M11.2 7.4L12.5 8.7L11.2 10"/></g></svg>
<svg style="left:270.3px;top:16.5px" width="8" height="5" viewBox="0 0 8 5"><path d="M0.6 0.6L4 4L7.4 0.6" fill="none" stroke="#5aa5dc" stroke-width="1.1"/></svg>
<svg style="left:282.9px;top:11px" width="17" height="17" viewBox="0 0 17 17"><g fill="none" stroke="#1f7bbf" stroke-width="1"><path d="M9.50 5.00L8.12 6.29L8.18 8.18L6.29 8.12L5.00 9.50L3.71 8.12L1.82 8.18L1.88 6.29L0.50 5.00L1.88 3.71L1.82 1.82L3.71 1.88L5.00 0.50L6.29 1.88L8.18 1.82L8.12 3.71Z"/><circle cx="5" cy="5" r="1.6"/><path d="M16.50 10.80L14.90 12.29L14.98 14.48L12.79 14.40L11.30 16.00L9.81 14.40L7.62 14.48L7.70 12.29L6.10 10.80L7.70 9.31L7.62 7.12L9.81 7.20L11.30 5.60L12.79 7.20L14.98 7.12L14.90 9.31Z"/><circle cx="11.3" cy="10.8" r="2"/></g></svg>
<svg style="left:304.3px;top:16.5px" width="8" height="5" viewBox="0 0 8 5"><path d="M0.6 0.6L4 4L7.4 0.6" fill="none" stroke="#5aa5dc" stroke-width="1.1"/></svg>
<svg style="left:317.3px;top:10.8px" width="17" height="17" viewBox="0 0 17 17"><g fill="none" stroke="#1f7bbf" stroke-width="1.25" stroke-linejoin="round" stroke-linecap="round"><circle cx="8.3" cy="8.2" r="7.6"/><path d="M3.5 11.5a5.8 5.8 0 0 1 6-8.8" stroke-width="0.8"/><path d="M8.3 4.2V9L11 11"/></g></svg>
<svg style="left:338.5px;top:16.5px" width="8" height="5" viewBox="0 0 8 5"><path d="M0.6 0.6L4 4L7.4 0.6" fill="none" stroke="#5aa5dc" stroke-width="1.1"/></svg>
<svg style="left:352.8px;top:10.6px" width="17" height="17" viewBox="0 0 17 17"><g fill="none" stroke="#1f7bbf" stroke-width="1.25" stroke-linejoin="round" stroke-linecap="round"><path d="M0.8 5.5L6.8 8.2L12.8 5.5 M0.8 5.5V13L6.8 15.8L12.8 13V5.5 M6.8 8.2V15.8"/><path d="M6.8 0.3V5.8 M4.6 3.6L6.8 5.8L9 3.6"/></g></svg>
<svg style="left:372.2px;top:16.5px" width="8" height="5" viewBox="0 0 8 5"><path d="M0.6 0.6L4 4L7.4 0.6" fill="none" stroke="#5aa5dc" stroke-width="1.1"/></svg>
<svg style="left:387px;top:10.6px" width="17" height="17" viewBox="0 0 17 17"><g fill="none" stroke="#1f7bbf" stroke-width="1.25" stroke-linejoin="round" stroke-linecap="round"><path d="M0.8 5.5L6.8 8.2L12.8 5.5 M0.8 5.5V13L6.8 15.8L12.8 13V5.5 M6.8 8.2V15.8"/><path d="M6.8 7V1 M2.8 4.8L6.8 0.8L10.8 4.8"/></g></svg>
<svg style="left:406.2px;top:16.5px" width="8" height="5" viewBox="0 0 8 5"><path d="M0.6 0.6L4 4L7.4 0.6" fill="none" stroke="#5aa5dc" stroke-width="1.1"/></svg>
<svg style="left:419.1px;top:11.3px" width="17" height="17" viewBox="0 0 17 17"><g fill="none" stroke="#1f7bbf" stroke-width="1.25" stroke-linejoin="round" stroke-linecap="round"><path d="M10 12.2H0.8V2h15.5v7"/><path d="M3 4.3h7 M3 6.8h5.5 M3 9.3h3.5"/><circle cx="13" cy="10.5" r="2.2"/><path d="M11.5 12.3L10.8 15.5 M14.5 12.3L15.2 15.5"/></g></svg>
<svg style="left:440.3px;top:16.5px" width="8" height="5" viewBox="0 0 8 5"><path d="M0.6 0.6L4 4L7.4 0.6" fill="none" stroke="#5aa5dc" stroke-width="1.1"/></svg>
<svg style="left:454px;top:10.8px" width="17" height="17" viewBox="0 0 17 17"><g fill="none" stroke="#1f7bbf" stroke-width="1.25" stroke-linejoin="round" stroke-linecap="round"><path d="M0.8 11V0.8h9"/><path d="M2.3 12.5V2.3h9"/><rect x="4" y="4" width="10.5" height="11.5"/><path d="M6.2 6.8h6 M6.2 9.2h6 M6.2 11.6h6"/></g></svg>
<svg style="left:474px;top:16.5px" width="8" height="5" viewBox="0 0 8 5"><path d="M0.6 0.6L4 4L7.4 0.6" fill="none" stroke="#5aa5dc" stroke-width="1.1"/></svg>
<svg style="left:488px;top:10.8px" width="17" height="17" viewBox="0 0 17 17"><g fill="none" stroke="#1f7bbf" stroke-width="1.25" stroke-linejoin="round" stroke-linecap="round"><path d="M9 2.3H0.8V15.5h13.5V7.5"/><path d="M15.5 1.2L14.3 0.2 6.5 8.8 5.8 11 7.8 10.3z"/></g></svg>
<svg style="left:508px;top:16.5px" width="8" height="5" viewBox="0 0 8 5"><path d="M0.6 0.6L4 4L7.4 0.6" fill="none" stroke="#5aa5dc" stroke-width="1.1"/></svg>
<svg style="left:521px;top:10.8px" width="17" height="17" viewBox="0 0 17 17"><g fill="none" stroke="#1f7bbf" stroke-width="1.25" stroke-linejoin="round" stroke-linecap="round"><path d="M3 2H0.8v13.5h16V2h-2.2 M6 2h5"/><path d="M4.3 0.3V3.5 M12.7 0.3V3.5"/></g><g fill="#1f7bbf" opacity="0.85"><rect x="3" y="6" width="1.6" height="1.2"/><rect x="6.4" y="6" width="1.6" height="1.2"/><rect x="9.8" y="6" width="1.6" height="1.2"/><rect x="13" y="6" width="1.6" height="1.2"/><rect x="3" y="9" width="1.6" height="1.2"/><rect x="6.4" y="9" width="1.6" height="1.2"/><rect x="9.8" y="9" width="1.6" height="1.2"/><rect x="13" y="9" width="1.6" height="1.2"/><rect x="3" y="12" width="1.6" height="1.2"/><rect x="6.4" y="12" width="1.6" height="1.2"/><rect x="9.8" y="12" width="1.6" height="1.2"/><rect x="13" y="12" width="1.6" height="1.2"/></g></svg>
<svg style="left:542.2px;top:16.5px" width="8" height="5" viewBox="0 0 8 5"><path d="M0.6 0.6L4 4L7.4 0.6" fill="none" stroke="#5aa5dc" stroke-width="1.1"/></svg>
<svg style="left:555px;top:10.8px" width="17" height="17" viewBox="0 0 17 17"><g fill="#1f7bbf"><circle cx="2.5" cy="6.9" r="1.6"/><circle cx="14.5" cy="6.9" r="1.6"/><path d="M0.7 9.5h3.6v2.4h3v1.2h-3v3.2H0.7z"/><path d="M16.3 9.5h-3.6v2.4h-3v1.2h3v3.2h3.6z"/></g><path fill="none" stroke="#1f7bbf" stroke-width="1.25" stroke-linejoin="round" stroke-linecap="round" d="M4.5 0.8h7.5v3.8H9.5l-1 1-1-1H4.5z" stroke-width="1.1"/></svg>
<svg style="left:578.8px;top:10.8px" width="17" height="17" viewBox="0 0 17 17"><g fill="none" stroke="#1f7bbf" stroke-width="1.25" stroke-linejoin="round" stroke-linecap="round"><path d="M10.8 11.5V0.8H0.8v15h7.5"/></g><g fill="#1f7bbf" opacity="0.8"><rect x="2.8" y="2.5" width="1.3" height="1.3"/><rect x="5.2" y="2.5" width="1.3" height="1.3"/><rect x="7.6" y="2.5" width="1.3" height="1.3"/><rect x="2.8" y="5.3" width="1.3" height="1.3"/><rect x="5.2" y="5.3" width="1.3" height="1.3"/><rect x="7.6" y="5.3" width="1.3" height="1.3"/><rect x="2.8" y="8.1" width="1.3" height="1.3"/><rect x="5.2" y="8.1" width="1.3" height="1.3"/><rect x="7.6" y="8.1" width="1.3" height="1.3"/><rect x="3.5" y="13.5" width="4" height="2"/></g><g fill="none" stroke="#1f7bbf" stroke-width="1.25" stroke-linejoin="round" stroke-linecap="round"><path d="M9.3 16v-2.6l1.2-2h4l1.2 2V16z M9.3 13.5h6.4"/></g></svg>
<svg style="left:599.6px;top:16.5px" width="8" height="5" viewBox="0 0 8 5"><path d="M0.6 0.6L4 4L7.4 0.6" fill="none" stroke="#5aa5dc" stroke-width="1.1"/></svg>
<svg style="left:612.8px;top:11px" width="17" height="17" viewBox="0 0 17 17"><g fill="none" stroke="#1f7bbf" stroke-width="1.25" stroke-linejoin="round" stroke-linecap="round"><rect x="0.8" y="1.8" width="15.5" height="13.5"/><path d="M2.5 9.5L4.8 7.2L7.8 10.5L11 6L14 8"/></g></svg>
<svg style="left:633.7px;top:16.5px" width="8" height="5" viewBox="0 0 8 5"><path d="M0.6 0.6L4 4L7.4 0.6" fill="none" stroke="#5aa5dc" stroke-width="1.1"/></svg>
<svg style="left:651.4px;top:10.8px" width="17" height="17" viewBox="0 0 17 17"><path fill="none" stroke="#1f7bbf" stroke-width="1.25" stroke-linejoin="round" stroke-linecap="round" d="M3.5 1.2a4 4 0 0 0-2.5 5a4 4 0 0 0 4.8 2.5l7.2 7.5 2.3-2.3-7.3-7.3a4 4 0 0 0-2-4.8L4 4.2 2.6 2.8z"/></svg>
<svg style="left:672.6px;top:16.5px" width="8" height="5" viewBox="0 0 8 5"><path d="M0.6 0.6L4 4L7.4 0.6" fill="none" stroke="#5aa5dc" stroke-width="1.1"/></svg>
<svg style="left:685px;top:10.8px" width="17" height="17" viewBox="0 0 17 17"><g fill="none" stroke="#1f7bbf" stroke-width="1.25" stroke-linejoin="round" stroke-linecap="round"><circle cx="6.2" cy="3.8" r="3"/><path d="M8.5 15H1.2v-2.5a3.5 3.5 0 0 1 3.5-3.5h3"/></g><path fill="#1f7bbf" d="M16.80 11.60L15.39 12.92L15.45 14.85L13.52 14.79L12.20 16.20L10.88 14.79L8.95 14.85L9.01 12.92L7.60 11.60L9.01 10.28L8.95 8.35L10.88 8.41L12.20 7.00L13.52 8.41L15.45 8.35L15.39 10.28Z"/><circle cx="12.2" cy="11.6" r="1.4" fill="#fff"/></svg>
<svg style="left:706.5px;top:16.5px" width="8" height="5" viewBox="0 0 8 5"><path d="M0.6 0.6L4 4L7.4 0.6" fill="none" stroke="#5aa5dc" stroke-width="1.1"/></svg>
<svg style="left:719.1px;top:10.6px" width="17" height="17" viewBox="0 0 17 17"><g fill="none" stroke="#1f7bbf" stroke-width="1.25" stroke-linejoin="round" stroke-linecap="round"><circle cx="8.5" cy="8.3" r="7.7"/></g><g fill="#1f7bbf"><circle cx="8.5" cy="4" r="1"/><path d="M7 6.2h2.3v6.3h1.2v1.2H6.3v-1.2h1.2V7.4H7z"/></g></svg>
<svg style="left:740.3px;top:16.5px" width="8" height="5" viewBox="0 0 8 5"><path d="M0.6 0.6L4 4L7.4 0.6" fill="none" stroke="#5aa5dc" stroke-width="1.1"/></svg>
<svg style="left:760.3px;top:10.6px" width="17" height="17" viewBox="0 0 17 17"><g fill="none" stroke="#1f7bbf" stroke-width="1.25" stroke-linejoin="round" stroke-linecap="round"><rect x="0.8" y="0.8" width="11.5" height="15.2" rx="1"/><path d="M3 3.3h7.5" stroke-width="1.5"/></g><g fill="#1f7bbf"><rect x="2.8" y="6" width="1.8" height="1.8"/><rect x="5.6" y="6" width="1.8" height="1.8"/><rect x="8.4" y="6" width="1.8" height="1.8"/><rect x="2.8" y="9" width="1.8" height="1.8"/><rect x="5.6" y="9" width="1.8" height="1.8"/><rect x="8.4" y="9" width="1.8" height="1.8"/><rect x="2.8" y="12" width="1.8" height="1.8"/><rect x="5.6" y="12" width="1.8" height="1.8"/><rect x="8.4" y="12" width="1.8" height="1.8"/></g></svg>
<svg style="left:779.2px;top:16.5px" width="8" height="5" viewBox="0 0 8 5"><path d="M0.6 0.6L4 4L7.4 0.6" fill="none" stroke="#5aa5dc" stroke-width="1.1"/></svg>
<div class="b" style="left:645px;top:10px;width:1px;height:17px;background:#d8d8d8"></div>
<div class="b" style="left:752.5px;top:10px;width:1.0px;height:17px;background:#d8d8d8"></div>
<svg style="left:12.45px;top:39.1px" width="12" height="12" viewBox="0 0 12 12"><g fill="none" stroke="#3a93cf" stroke-width="1.1"><path d="M10 7.3A4.9 4.9 0 1 1 8.4 1.2"/><path d="M6.8 3.6H10.1V0.2"/></g></svg>
<svg style="left:92.45px;top:39px" width="12" height="12" viewBox="0 0 12 12"><g fill="none" stroke="#3a93cf" stroke-width="1"><path d="M3.6 1.5H11.3L7.2 6V10.7M4.4 4.5V9.8"/><path d="M0.5 0.5L10.4 10.2" stroke-width="1.6"/></g></svg>
<svg style="left:13px;top:188px" width="12" height="12" viewBox="0 0 12 12"><g fill="none" stroke="#3a93cf" stroke-width="1"><path d="M3.6 1.5H11.3L7.2 6V10.7M4.4 4.5V9.8"/><path d="M0.5 0.5L10.4 10.2" stroke-width="1.6"/></g></svg>
<svg style="left:15.1px;top:344.9px" width="11" height="10" viewBox="0 0 11 10"><path d="M5 1.0H11" stroke="#1f7bbf" stroke-width="1.5"/><rect x="0.6" y="0.0" width="2" height="2" fill="#1f7bbf"/><path d="M5 4.9H11" stroke="#1f7bbf" stroke-width="1.5"/><path d="M0 4.9L1.3 6.1000000000000005L3.6 3.5000000000000004" fill="none" stroke="#1f7bbf" stroke-width="1.2"/><path d="M5 8.8H11" stroke="#1f7bbf" stroke-width="1.5"/><rect x="0.6" y="7.800000000000001" width="2" height="2" fill="#1f7bbf"/></svg>
<svg style="left:31px;top:344.9px" width="11" height="10" viewBox="0 0 11 10"><path d="M5 1.0H11" stroke="#1f7bbf" stroke-width="1.5"/><rect x="0.6" y="0.0" width="2" height="2" fill="#1f7bbf"/><path d="M5 4.9H11" stroke="#1f7bbf" stroke-width="1.5"/><path d="M0.4 3.6000000000000005L3 6.2M3 3.6000000000000005L0.4 6.2" fill="none" stroke="#1f7bbf" stroke-width="1.2"/><path d="M5 8.8H11" stroke="#1f7bbf" stroke-width="1.5"/><rect x="0.6" y="7.800000000000001" width="2" height="2" fill="#1f7bbf"/></svg>
<svg style="left:46.7px;top:344.9px" width="11" height="10" viewBox="0 0 11 10"><path d="M5 1.0H11" stroke="#1f7bbf" stroke-width="1.5"/><path d="M0 1.0L1.3 2.2L3.6 -0.3999999999999999" fill="none" stroke="#1f7bbf" stroke-width="1.2"/><path d="M5 4.9H11" stroke="#1f7bbf" stroke-width="1.5"/><path d="M0 4.9L1.3 6.1000000000000005L3.6 3.5000000000000004" fill="none" stroke="#1f7bbf" stroke-width="1.2"/><path d="M5 8.8H11" stroke="#1f7bbf" stroke-width="1.5"/><path d="M0 8.8L1.3 10.0L3.6 7.4" fill="none" stroke="#1f7bbf" stroke-width="1.2"/></svg>
<svg style="left:62.7px;top:344.9px" width="11" height="10" viewBox="0 0 11 10"><path d="M5 1.0H11" stroke="#1f7bbf" stroke-width="1.5"/><path d="M0.4 -0.30000000000000004L3 2.3M3 -0.30000000000000004L0.4 2.3" fill="none" stroke="#1f7bbf" stroke-width="1.2"/><path d="M5 4.9H11" stroke="#1f7bbf" stroke-width="1.5"/><path d="M0.4 3.6000000000000005L3 6.2M3 3.6000000000000005L0.4 6.2" fill="none" stroke="#1f7bbf" stroke-width="1.2"/><path d="M5 8.8H11" stroke="#1f7bbf" stroke-width="1.5"/><path d="M0.4 7.500000000000001L3 10.100000000000001M3 7.500000000000001L0.4 10.100000000000001" fill="none" stroke="#1f7bbf" stroke-width="1.2"/></svg>
<div class="b" style="left:79px;top:344.4px;width:1px;height:12.300000000000011px;background:#e0e0e0"></div>
<div class="b" style="left:193.5px;top:344.4px;width:1.0px;height:12.300000000000011px;background:#e0e0e0"></div>
<div class="b" style="left:392.3px;top:344.4px;width:1.0px;height:12.300000000000011px;background:#e0e0e0"></div>
<svg style="left:83.4px;top:344.8px" width="12" height="10" viewBox="0 0 12 10"><path d="M6 0.6L11.4 9.5H0.6Z M6 3.5V7" fill="none" stroke="#c8c8c8" stroke-width="0.9"/></svg>
<div class="t dis" style="left:97.8px;top:342.7px;height:16px;line-height:16px;">Grund für Löschsperre</div>
<svg style="left:198.9px;top:344.8px" width="10" height="11" viewBox="0 0 10 11"><g fill="none" stroke="#3a93cf" stroke-width="1.1"><path d="M1.2 2.5V10.5H8.8V2.5"/><path d="M0.3 2H9.7M3.5 1.5V0.5H6.5V1.5M3.7 4.2V8.8M6.3 4.2V8.8"/></g></svg>
<div class="t " style="left:211.7px;top:342.7px;height:16px;line-height:16px;color:#333">Artikel löschen</div>
<svg style="left:275px;top:345px" width="10" height="11" viewBox="0 0 10 11"><g fill="none" stroke="#c8c8c8" stroke-width="0.9"><path d="M6 10.5H0.5V0.5H6L9.5 4V6"/><path d="M2 3.5H5M2 5.5H5"/><rect x="5" y="6.8" width="4.5" height="3.7"/></g></svg>
<div class="t dis" style="left:288.9px;top:342.7px;height:16px;line-height:16px;">Artikel im Stapel löschen</div>
<svg style="left:397.4px;top:345.2px" width="11" height="11" viewBox="0 0 11 11"><g fill="none" stroke="#3a93cf" stroke-width="1.2"><path d="M0.8 10.5V3H9.5"/><path d="M7.2 0.8L9.6 3L7.2 5.2"/></g></svg>
<div class="t " style="left:411.2px;top:342.7px;height:16px;line-height:16px;color:#333">Gehe zu Artikel</div>
<svg style="left:476px;top:345px" width="11" height="11" viewBox="0 0 11 11"><g fill="none" stroke="#c8c8c8" stroke-width="0.9"><rect x="3.2" y="0.5" width="4.6" height="3"/><path d="M5.5 3.5V5.5M2.5 5.5H8.5V7M2.5 5.5V7"/><rect x="0.5" y="7" width="4" height="3.5"/><rect x="6.5" y="7" width="4" height="3.5"/></g></svg>
<div class="t dis" style="left:490.1px;top:342.7px;height:16px;line-height:16px;">Stückliste</div>
<svg style="left:531.5px;top:345px" width="11" height="11" viewBox="0 0 11 11"><g fill="none" stroke="#c8c8c8" stroke-width="0.9"><rect x="0.5" y="0.5" width="4" height="3.5"/><rect x="6.5" y="0.5" width="4" height="3.5"/><path d="M2.5 4V5.5H8.5V4M5.5 5.5V7"/><rect x="3.2" y="7" width="4.6" height="3.5"/></g></svg>
<div class="t dis" style="left:545.7px;top:342.7px;height:16px;line-height:16px;">Verwendung Stückliste</div>
<svg style="left:639.6px;top:344.8px" width="12" height="10" viewBox="0 0 12 10"><path fill="#3a93cf" d="M0.5 1.5Q0.5 0.3 1.7 0.3H6.5Q7.7 0.3 7.7 1.5V3.5H9.5L11.5 6V9H10A1.4 1.4 0 0 1 7.3 9H4.7A1.4 1.4 0 0 1 2 9H0.5Z"/><g fill="#fff"><rect x="2" y="2" width="1.3" height="1.3"/><rect x="4.8" y="2" width="1.3" height="1.3"/><rect x="2" y="5" width="1.3" height="1.3"/><rect x="4.8" y="5" width="1.3" height="1.3"/><rect x="8.3" y="5" width="1.5" height="1.3"/></g></svg>
<div class="t " style="left:653.4px;top:342.7px;height:16px;line-height:16px;color:#333">Kundenspezifisches Menü</div>
<svg style="left:758.3px;top:347.7px" width="8" height="5" viewBox="0 0 8 5"><path d="M0.6 0.6L4 4L7.4 0.6" fill="none" stroke="#3a93cf" stroke-width="1.1"/></svg>
<svg style="left:1320px;top:368px" width="12" height="11" viewBox="0 0 12 11"><g fill="none" stroke="#3a93cf" stroke-width="1.1"><circle cx="4.8" cy="4.6" r="4"/><path d="M7.8 7.6L11 10.6"/></g></svg>
<svg style="left:65.2px;top:404px" width="11" height="11" viewBox="0 0 11 11"><g fill="none" stroke="#3a93cf" stroke-width="1"><path d="M0.3 0.8H2L3.5 7H9L10.3 2.5H2.6"/><path d="M3.8 4.7H9.6"/><path d="M4 7V9.5M8.5 7V9.5" stroke-width="1.4"/></g></svg>
<svg style="left:65.2px;top:418.90000000000003px" width="11" height="11" viewBox="0 0 11 11"><g fill="none" stroke="#3a93cf" stroke-width="0.9" stroke-linejoin="round"><path d="M2.6999999999999997 1.5499999999999998L5.3 0.19999999999999973L7.9 1.5499999999999998V4.25L5.3 5.6L2.6999999999999997 4.25Z M2.6999999999999997 1.5499999999999998L5.3 2.9L7.9 1.5499999999999998M5.3 2.9V5.6"/><path d="M0.10000000000000009 6.25L2.7 4.8999999999999995L5.300000000000001 6.25V8.95L2.7 10.3L0.10000000000000009 8.95Z M0.10000000000000009 6.25L2.7 7.6L5.300000000000001 6.25M2.7 7.6V10.3"/><path d="M5.4 6.25L8.0 4.8999999999999995L10.6 6.25V8.95L8.0 10.3L5.4 8.95Z M5.4 6.25L8.0 7.6L10.6 6.25M8.0 7.6V10.3"/></g></svg>
<svg style="left:65.2px;top:434.20000000000005px" width="11" height="11" viewBox="0 0 11 11"><g fill="none" stroke="#3a93cf" stroke-width="0.9" stroke-linejoin="round"><path d="M2.6999999999999997 1.5499999999999998L5.3 0.19999999999999973L7.9 1.5499999999999998V4.25L5.3 5.6L2.6999999999999997 4.25Z M2.6999999999999997 1.5499999999999998L5.3 2.9L7.9 1.5499999999999998M5.3 2.9V5.6"/><path d="M0.10000000000000009 6.25L2.7 4.8999999999999995L5.300000000000001 6.25V8.95L2.7 10.3L0.10000000000000009 8.95Z M0.10000000000000009 6.25L2.7 7.6L5.300000000000001 6.25M2.7 7.6V10.3"/><path d="M5.4 6.25L8.0 4.8999999999999995L10.6 6.25V8.95L8.0 10.3L5.4 8.95Z M5.4 6.25L8.0 7.6L10.6 6.25M8.0 7.6V10.3"/></g></svg>
<svg style="left:65.2px;top:449.5px" width="11" height="11" viewBox="0 0 11 11"><g fill="none" stroke="#3a93cf" stroke-width="0.9" stroke-linejoin="round"><path d="M2.6999999999999997 1.5499999999999998L5.3 0.19999999999999973L7.9 1.5499999999999998V4.25L5.3 5.6L2.6999999999999997 4.25Z M2.6999999999999997 1.5499999999999998L5.3 2.9L7.9 1.5499999999999998M5.3 2.9V5.6"/><path d="M0.10000000000000009 6.25L2.7 4.8999999999999995L5.300000000000001 6.25V8.95L2.7 10.3L0.10000000000000009 8.95Z M0.10000000000000009 6.25L2.7 7.6L5.300000000000001 6.25M2.7 7.6V10.3"/><path d="M5.4 6.25L8.0 4.8999999999999995L10.6 6.25V8.95L8.0 10.3L5.4 8.95Z M5.4 6.25L8.0 7.6L10.6 6.25M8.0 7.6V10.3"/></g></svg>
<svg style="left:454.5px;top:404px" width="12" height="11" viewBox="0 0 12 11"><g fill="none" stroke="#3a93cf" stroke-width="0.9"><path d="M6 0.6L11.4 10H0.6Z"/><path d="M6 4V7.2M6 8.2V9"/></g></svg>
<svg style="left:14.8px;top:518px" width="10" height="10" viewBox="0 0 10 10"><path d="M8.6 2.2A4.3 4.3 0 1 0 9.2 6.5" fill="none" stroke="#3a93cf" stroke-width="1.1"/></svg>
<div class="t " style="left:28.5px;top:514.8px;height:16px;line-height:16px;color:#333">Auftragsdaten laden</div>
<svg style="left:115px;top:517.7px" width="11" height="11" viewBox="0 0 11 11"><g fill="none" stroke="#c8c8c8" stroke-width="1"><path d="M0.8 10V3H10"/><path d="M7.8 0.8L10 3L7.8 5.2"/></g></svg>
<div class="t dis" style="left:128.9px;top:514.8px;height:16px;line-height:16px;">Gehe zu Auftrag</div>
<svg style="left:198.8px;top:517.7px" width="11" height="11" viewBox="0 0 11 11"><g fill="none" stroke="#c8c8c8" stroke-width="1"><path d="M0.8 10V3H10"/><path d="M7.8 0.8L10 3L7.8 5.2"/></g></svg>
<div class="t dis" style="left:212.7px;top:514.8px;height:16px;line-height:16px;">Gehe zu Kunde</div>
<svg style="left:33.2px;top:660.6px" width="12" height="11" viewBox="0 0 12 11"><g fill="none" stroke="#3a93cf" stroke-width="0.9"><path d="M0.5 1.5H11.5V10.5H0.5Z"/><path d="M3 0.3V2.5M9 0.3V2.5"/><circle cx="3.8" cy="5.5" r="1"/><path d="M2 9V7.8H5.5V9"/><path d="M7 5H10M7 7H10M7 9H10"/></g></svg>
<svg style="left:127.5px;top:662.5px" width="7" height="7" viewBox="0 0 7 7"><path d="M0.5 0.5L6.5 6.5M6.5 0.5L0.5 6.5" stroke="#444" stroke-width="1"/></svg>
<svg style="left:1330px;top:668px" width="7" height="4" viewBox="0 0 7 4"><path d="M0 0H7L3.5 3.5Z" fill="#555"/></svg>
<div class="b" style="left:267px;top:678px;width:141px;height:22px;border:1px solid #e6e6e6;border-radius:5px;background:#fcfcfc"></div>
<div class="b" style="left:10.099999999999998px;top:63.0px;width:20.6px;height:20.6px;border-radius:50%;background:#8b0000;color:#fff;font-size:12.5px;line-height:20.6px;text-align:center;letter-spacing:0">1</div>
<div class="b" style="left:12.099999999999998px;top:169.89999999999998px;width:20.6px;height:20.6px;border-radius:50%;background:#8b0000;color:#fff;font-size:12.5px;line-height:20.6px;text-align:center;letter-spacing:0">2</div>
<div class="b" style="left:11.3px;top:325.9px;width:20.6px;height:20.6px;border-radius:50%;background:#8b0000;color:#fff;font-size:12.5px;line-height:20.6px;text-align:center;letter-spacing:0">3</div>
<div class="b" style="left:12.0px;top:423.2px;width:20.6px;height:20.6px;border-radius:50%;background:#8b0000;color:#fff;font-size:12.5px;line-height:20.6px;text-align:center;letter-spacing:0">4</div>
<div class="b" style="left:13.5px;top:499.5px;width:20.6px;height:20.6px;border-radius:50%;background:#8b0000;color:#fff;font-size:12.5px;line-height:20.6px;text-align:center;letter-spacing:0">5</div>
</body></html>
